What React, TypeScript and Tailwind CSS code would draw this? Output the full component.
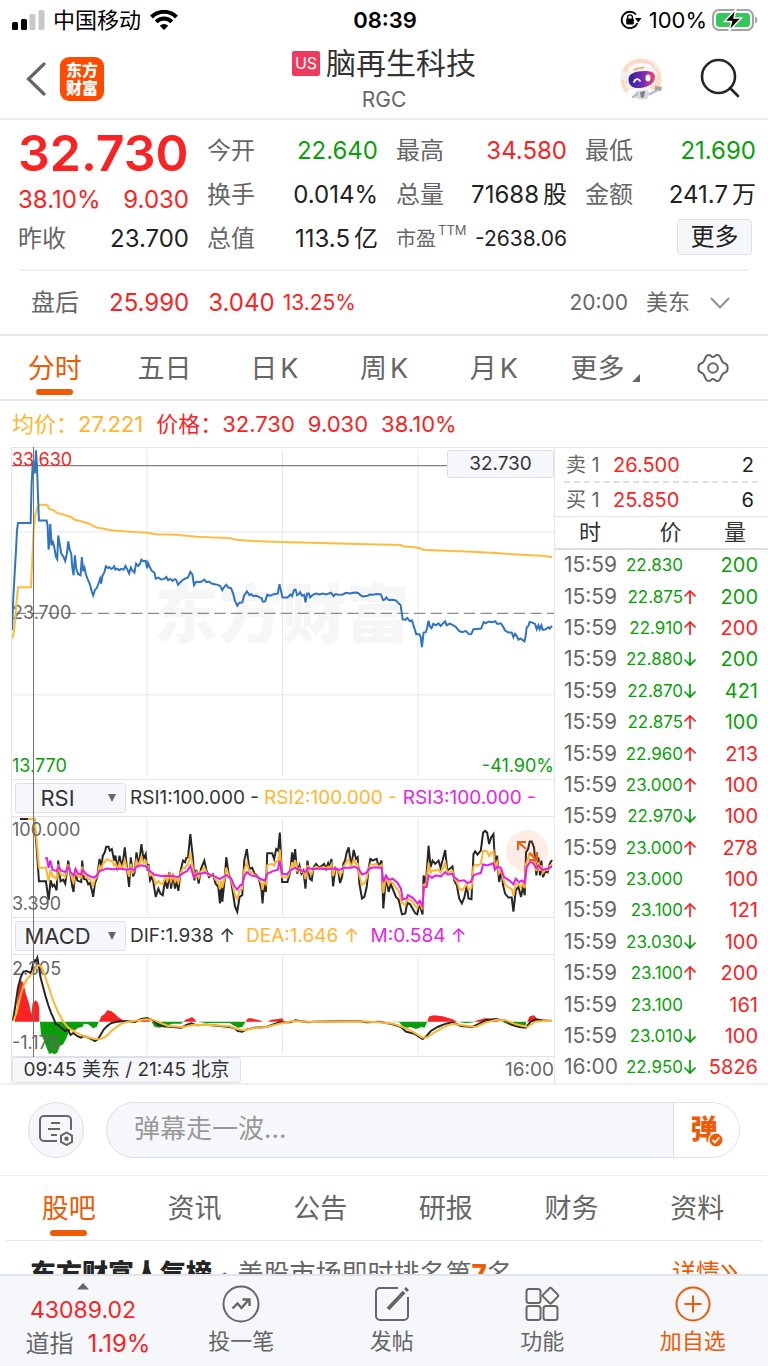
import { ReactNode } from "react";

type Point = [number, number];

const parse = (text: string): Point[] =>
  text
    .trim()
    .split(/\s+/)
    .map((pair) => pair.split(",").map(Number) as Point);

const path = (points: Point[]) => "M" + points.map(([x, y]) => `${x} ${y}`).join("L");

const valueAt = (points: Point[], x: number) => {
  for (let i = 1; i < points.length; i++) {
    const [x0, y0] = points[i - 1];
    const [x1, y1] = points[i];
    if (x >= x0 && x <= x1) return x1 === x0 ? y1 : y0 + ((y1 - y0) * (x - x0)) / (x1 - x0);
  }
  return points[points.length - 1][1];
};

const PRICE = parse(`36,570 40,470 44,400 48,330 51,270 54,247 92,247 95,130 98,72 100,60 103,80 105,98 108,28 111,75 114,160 117,240 140,240 143,255 146,328 149,300 151,250 155,315 158,300 163,320 168,350 172,357 175,285 180,315 184,340 190,348 196,362 201,340 205,303 210,330 214,340 217,380 221,405 225,345 229,385 235,402 242,405 246,350 250,393 254,382 258,402 264,418 270,432 276,455 280,466 285,450 291,443 296,430 301,415 304,430 308,407 314,395 318,378 324,383 328,380 334,386 339,384 343,378 347,388 353,385 358,390 364,386 372,388 377,377 383,388 388,400 393,382 399,392 404,397 409,370 415,377 421,370 425,358 430,363 438,362 442,384 445,368 450,380 456,392 464,397 468,415 476,412 484,418 494,416 500,410 505,420 512,416 518,422 525,417 530,420 535,434 542,426 548,420 556,415 565,412 572,395 578,402 583,435 590,424 598,426 606,424 614,418 620,426 628,424 636,430 645,432 655,434 662,438 668,450 674,440 680,434 686,442 694,444 700,458 706,482 713,497 720,488 728,487 734,465 742,454 750,465 755,462 762,468 772,467 780,472 786,474 790,485 797,484 803,464 812,467 820,463 835,460 840,432 849,472 864,472 873,463 878,468 883,450 888,448 893,465 898,462 902,456 907,466 914,464 918,487 923,460 928,460 932,472 940,464 950,460 960,463 970,460 980,463 995,458 1002,468 1008,462 1016,464 1030,463 1040,458 1052,460 1065,457 1075,458 1083,465 1090,469 1105,467 1110,463 1120,464 1132,462 1145,463 1151,480 1157,478 1161,472 1168,480 1180,479 1190,481 1197,489 1204,495 1210,538 1218,540 1224,534 1232,544 1238,541 1244,560 1251,583 1260,583 1264,590 1268,622 1273,578 1280,577 1284,562 1288,542 1292,560 1297,565 1302,552 1310,556 1318,550 1324,558 1332,550 1338,544 1342,556 1352,551 1360,555 1370,561 1380,574 1390,577 1400,573 1408,582 1416,583 1423,568 1435,567 1446,566 1454,546 1460,550 1468,545 1480,547 1488,544 1495,552 1505,550 1512,560 1518,572 1528,578 1538,578 1543,592 1548,582 1554,590 1558,600 1564,596 1570,600 1576,605 1580,588 1583,562 1588,558 1592,546 1600,548 1608,552 1613,568 1618,556 1622,568 1627,556 1631,570 1640,568 1648,562 1652,566 1659,558`);

const AVERAGE = parse(`36,597 42,575 46,530 50,480 54,441 93,441 97,360 101,270 106,222 112,202 118,192 138,192 143,195 147,204 162,209 170,217 185,220 198,225 214,229 222,237 245,243 265,248 275,254 290,261 320,266 330,269 370,272 440,277 470,281 530,283 590,289 690,293 710,298 750,301 840,305 960,308 1080,311 1205,314 1212,318 1240,320 1260,323 1272,328 1320,330 1420,334 1500,339 1580,344 1640,347 1652,350 1659,350`);

const RSI1 = parse(`60,114 103,114 110,200 117,303 138,303 146,360 152,300 158,318 163,313 170,330 175,240 182,303 190,298 196,310 205,240 212,285 217,318 221,335 226,268 232,300 238,303 244,305 247,240 252,295 260,298 265,312 270,308 276,330 280,350 285,310 292,290 299,235 304,262 309,225 315,215 319,198 326,198 330,210 336,205 343,240 347,225 353,270 359,225 367,262 375,200 381,258 388,320 393,230 400,288 405,275 410,215 417,258 425,190 431,235 438,220 442,270 446,250 451,300 458,288 468,350 476,325 482,340 489,345 496,300 503,325 509,275 514,325 520,280 526,325 531,300 536,332 543,270 550,240 556,245 560,232 565,230 572,160 580,235 584,300 590,268 597,310 604,265 614,240 620,268 628,290 640,282 648,310 656,320 661,370 665,310 668,365 675,300 680,230 687,280 693,295 699,330 706,378 713,395 720,350 728,345 734,240 742,205 749,265 758,262 765,280 772,285 778,295 786,330 789,370 794,310 799,335 803,218 818,218 824,235 830,205 836,210 841,155 848,305 864,305 872,275 878,215 882,255 887,205 893,280 900,255 906,280 912,270 918,325 924,240 931,295 937,300 942,262 950,250 960,262 974,250 980,265 986,248 990,262 996,235 1001,318 1008,262 1016,270 1022,308 1028,290 1032,250 1037,240 1042,215 1048,200 1054,250 1058,240 1063,208 1070,235 1075,230 1080,310 1088,355 1095,350 1102,320 1108,262 1113,235 1120,240 1132,235 1138,258 1147,240 1152,385 1160,290 1168,335 1174,310 1180,325 1190,350 1198,358 1208,403 1218,400 1224,368 1232,372 1240,385 1248,400 1254,403 1260,370 1270,403 1273,285 1280,310 1288,195 1294,260 1300,240 1308,250 1318,240 1324,262 1330,240 1338,208 1344,270 1352,265 1360,258 1365,300 1373,315 1380,355 1388,370 1396,350 1403,315 1408,355 1417,357 1423,220 1428,212 1435,222 1445,210 1452,155 1458,150 1464,155 1470,190 1476,170 1483,160 1488,255 1494,225 1500,305 1507,270 1512,315 1518,340 1528,352 1538,352 1543,395 1550,330 1558,320 1566,350 1572,318 1577,345 1581,215 1587,205 1592,182 1598,182 1605,200 1612,285 1618,230 1623,285 1627,240 1632,290 1640,270 1646,275 1652,250 1659,238`);

const RSI3 = parse(`135,233 141,233 146,262 151,240 158,268 170,272 176,258 183,270 196,275 205,260 213,276 221,285 227,265 235,280 244,282 248,268 256,278 265,285 280,292 292,285 299,272 310,268 320,264 340,266 360,264 380,268 395,264 404,270 410,258 425,254 440,258 450,272 465,283 485,287 500,286 515,287 535,290 550,278 562,272 572,256 582,290 592,280 605,280 614,276 630,282 645,288 660,296 680,284 695,295 705,318 713,328 722,315 728,312 735,285 742,275 755,285 770,288 788,298 797,300 803,280 820,272 835,268 840,240 848,280 862,282 872,270 886,262 900,268 918,275 925,262 940,266 960,264 980,266 1000,264 1020,268 1035,262 1055,262 1065,258 1078,265 1088,282 1100,278 1110,264 1125,260 1147,262 1152,305 1160,285 1168,298 1180,295 1195,308 1205,325 1210,358 1222,355 1226,345 1240,352 1255,370 1262,362 1270,378 1274,320 1282,320 1288,285 1298,292 1310,285 1325,288 1338,275 1345,282 1360,280 1365,290 1380,302 1395,300 1405,308 1415,305 1423,285 1435,280 1445,278 1452,252 1465,255 1483,248 1487,268 1495,258 1505,262 1515,290 1530,300 1543,312 1550,295 1560,305 1570,300 1577,308 1583,260 1592,245 1600,245 1612,262 1618,255 1630,268 1645,265 1659,258`);

// The middle RSI runs between the fast and the slow one.
const RSI2: Point[] = [
  ...parse("84,114 103,114 110,180 117,262 138,262"),
  ...RSI1.filter(([x]) => x > 140).map(([x, y]): Point => [x, y * 0.42 + valueAt(RSI3, x) * 0.58]),
];

const DIF = parse(`38,720 42,700 48,660 54,620 62,590 70,572 80,570 90,575 94,572 98,555 103,538 108,540 112,530 116,552 122,590 130,620 138,650 146,675 153,695 160,710 168,730 175,732 185,742 196,750 204,745 212,762 220,756 232,765 242,770 252,765 265,770 278,776 285,780 294,775 302,762 312,745 322,735 335,726 350,722 380,720 405,723 425,714 442,711 460,718 475,730 490,736 520,738 545,740 560,732 575,727 590,733 620,731 660,735 690,738 705,742 715,750 728,752 742,745 765,740 800,738 840,724 872,724 888,718 900,720 930,724 940,722 1080,720 1100,724 1140,722 1180,730 1205,738 1220,752 1245,758 1260,768 1270,774 1282,765 1295,750 1315,738 1340,728 1360,724 1385,735 1420,738 1440,728 1460,718 1490,714 1520,720 1540,732 1560,738 1580,740 1595,722 1610,715 1630,718 1659,720`);

const DEA = parse(`40,720 50,695 60,650 70,615 80,595 95,580 103,570 110,556 118,553 126,560 135,585 145,615 155,645 165,672 175,695 190,722 205,740 220,750 240,760 260,768 285,774 305,773 320,765 335,750 350,738 365,728 385,722 440,715 460,716 480,725 505,735 550,738 580,732 620,731 690,736 715,745 735,748 760,742 800,738 840,728 880,720 940,723 1080,721 1140,724 1180,728 1210,738 1240,752 1270,770 1285,768 1305,755 1330,740 1360,728 1385,732 1430,738 1460,724 1490,717 1520,718 1550,730 1585,738 1610,722 1640,719 1659,720`);

const GAINS = [
  "44,722 50,690 55,620 62,597 70,605 78,640 88,670 94,700 98,665 108,658 114,665 118,680 118,722",
  "297,722 305,705 315,698 322,688 334,690 345,698 355,708 368,716 375,722",
  "420,722 430,717 445,717 452,722",
  "550,722 562,714 570,712 577,708 585,715 590,722",
  "738,722 745,712 755,712 780,718 790,722",
  "805,722 815,716 835,714 849,712 853,722",
  "1284,722 1290,706 1305,703 1330,706 1360,715 1375,722",
  "1425,722 1435,718 1460,711 1480,714 1500,722",
  "1584,722 1592,706 1605,703 1615,715 1622,722",
];

const LOSSES = [
  "120,722 123,760 133,780 140,800 148,820 155,815 163,820 172,815 180,795 190,790 200,770 206,755 214,745 225,748 235,740 248,738 252,728 265,730 280,742 290,738 297,722",
  "455,722 465,738 480,740 495,735 520,728 545,728 550,722",
  "595,722 620,727 690,726 705,735 715,740 728,738 738,722",
  "1170,722 1200,724 1215,742 1235,738 1250,744 1268,738 1276,740 1284,722",
  "1376,722 1400,727 1424,724 1425,722",
  "1510,722 1530,732 1550,735 1580,732 1582,722",
];

const VERTICALS = [442, 849, 1256];

function Line({ points, color, width = 2 }: { points: Point[]; color: string; width?: number }) {
  return (
    <path
      d={path(points)}
      fill="none"
      stroke={color}
      strokeWidth={width}
      strokeLinejoin="miter"
      vectorEffect="non-scaling-stroke"
    />
  );
}

function Grid({ top, bottom, rows = [] }: { top: number; bottom: number; rows?: number[] }) {
  return (
    <g stroke="#e3e8ee" strokeWidth={3}>
      {VERTICALS.map((x) => (
        <path key={x} d={`M${x} ${top + 6}V${bottom - 6}`} />
      ))}
      {rows.map((y) => (
        <path key={y} d={`M36 ${y}H1665`} />
      ))}
    </g>
  );
}

function PriceChart() {
  return (
    <div className="relative h-[333px] border-y border-[#e3e6ea]">
      <div
        aria-hidden="true"
        className="absolute left-[142px] top-[130px] text-[64px] leading-[72px] font-black text-[#f6f6f6]"
      >
        东方财富
      </div>
      <svg
        role="img"
        aria-label="分时走势"
        className="absolute inset-0 h-full w-full"
        viewBox="36 21 1629 999"
        preserveAspectRatio="none"
      >
        <Grid top={21} bottom={1019} rows={[274, 766]} />
        <path d="M44 520H1665" stroke="#8b8b8b" strokeWidth={4} strokeDasharray="34 16" />
        <path d="M36 74H1665" stroke="#808080" strokeWidth={4} />
      </svg>
      <span className="absolute left-0 top-0 text-[18px] leading-[24px] text-[#fa2222]">33.630</span>
      <span className="absolute left-0 top-[153px] text-[18px] leading-[24px] text-[#666]">23.700</span>
      <span className="absolute bottom-0 left-0 text-[18px] leading-[26px] text-[#0a9f0a]">13.770</span>
      <span className="absolute right-0 bottom-0 text-[18px] leading-[26px] text-[#0a9f0a]">-41.90%</span>
      <svg
        aria-hidden="true"
        className="absolute inset-0 h-full w-full"
        viewBox="36 21 1629 999"
        preserveAspectRatio="none"
      >
        <Line points={AVERAGE} color="#ffbb3c" />
        <Line points={PRICE} color="#2f74c0" />
      </svg>
      <span className="absolute right-0 top-[2px] flex h-[28px] w-[107px] items-center justify-center rounded-[3px] border border-[#dcdfe6] bg-[#f6f7fa] text-[19px] text-[#333]">
        32.730
      </span>
    </div>
  );
}

function RsiChart() {
  return (
    <div className="relative h-[102px] border-y border-[#dfe2e8]">
      <svg
        role="img"
        aria-label="RSI 指标"
        className="absolute inset-0 h-full w-full"
        viewBox="36 108 1629 303"
        preserveAspectRatio="none"
      >
        <Grid top={108} bottom={411} />
        <Line points={RSI1} color="#262626" />
        <Line points={RSI2} color="#ffb52e" />
        <Line points={RSI3} color="#e61ee6" />
      </svg>
      <span className="absolute left-0 top-0 text-[18px] leading-[26px] text-[#666]">100.000</span>
      <span className="absolute bottom-0 left-0 text-[18px] leading-[26px] text-[#666]">3.390</span>
      <button
        aria-label="放大图表"
        className="absolute right-[6px] top-[13px] flex h-[42px] w-[42px] items-center justify-center rounded-full bg-[#f0530a]/10"
      >
        <svg viewBox="0 0 42 42" className="h-[42px] w-[42px]" fill="none" stroke="#f25a0c" strokeWidth="2">
          <path d="M12 20V12h8M12 12l8 7M31 22v8h-8M31 30l-8-7" />
        </svg>
      </button>
    </div>
  );
}

function MacdChart() {
  return (
    <div className="relative h-[103px] border-y border-[#dfe2e8]">
      <svg
        role="img"
        aria-label="MACD 指标"
        className="absolute inset-0 h-full w-full"
        viewBox="36 522 1629 303"
        preserveAspectRatio="none"
      >
        <Grid top={522} bottom={825} />
        {GAINS.map((area) => (
          <polygon key={area} points={area} fill="#fa2222" />
        ))}
        {LOSSES.map((area) => (
          <polygon key={area} points={area} fill="#0a9f0a" />
        ))}
      </svg>
      <span className="absolute left-0 top-0 text-[18px] leading-[28px] text-[#666]">2.305</span>
      <span className="absolute bottom-0 left-0 text-[18px] leading-[26px] text-[#666]">-1.178</span>
      <svg
        aria-hidden="true"
        className="absolute inset-0 h-full w-full"
        viewBox="36 522 1629 303"
        preserveAspectRatio="none"
      >
        <Line points={DIF} color="#262626" />
        <Line points={DEA} color="#ffb52e" />
      </svg>
    </div>
  );
}

function IndicatorBar({
  label,
  value,
  options,
  children,
}: {
  label: string;
  value: string;
  options: string[];
  children: ReactNode;
}) {
  return (
    <div className="flex h-[36px] items-center gap-[4px] pl-[3px]">
      <div className="relative">
        <select
          aria-label={label}
          defaultValue={value}
          className="h-[30px] w-[111px] appearance-none rounded-[3px] border border-[#dcdfe6] bg-[#f6f7fa] pr-[26px] text-center text-[22px] leading-[28px] text-[#333]"
        >
          {options.map((option) => (
            <option key={option}>{option}</option>
          ))}
        </select>
        <svg viewBox="0 0 10 10" className="pointer-events-none absolute right-[9px] top-[10px] h-[10px] w-[10px]" fill="#666">
          <path d="M1 1h8L5 9z" />
        </svg>
      </div>
      <div className="flex text-[19px] whitespace-nowrap">{children}</div>
    </div>
  );
}

type Direction = "up" | "down" | "none";
type Trade = [string, string, Direction, string, "buy" | "sell"];

const TRADES: Trade[] = [
  ["15:59", "22.830", "none", "200", "sell"],
  ["15:59", "22.875", "up", "200", "sell"],
  ["15:59", "22.910", "up", "200", "buy"],
  ["15:59", "22.880", "down", "200", "sell"],
  ["15:59", "22.870", "down", "421", "sell"],
  ["15:59", "22.875", "up", "100", "sell"],
  ["15:59", "22.960", "up", "213", "buy"],
  ["15:59", "23.000", "up", "100", "buy"],
  ["15:59", "22.970", "down", "100", "buy"],
  ["15:59", "23.000", "up", "278", "buy"],
  ["15:59", "23.000", "none", "100", "buy"],
  ["15:59", "23.100", "up", "121", "buy"],
  ["15:59", "23.030", "down", "100", "buy"],
  ["15:59", "23.100", "up", "200", "buy"],
  ["15:59", "23.100", "none", "161", "buy"],
  ["15:59", "23.010", "down", "100", "buy"],
  ["16:00", "22.950", "down", "5826", "buy"],
];

function Arrow({ direction }: { direction: Direction }) {
  if (direction === "none") return <span className="inline-block w-[13px]" />;
  const up = direction === "up";
  return (
    <svg
      viewBox="0 0 13 16"
      className="inline-block h-[16px] w-[13px] align-[-2px]"
      fill="none"
      stroke={up ? "#fa2222" : "#0a9f0a"}
      strokeWidth="1.7"
    >
      <path d={up ? "M7 15V2M1.500 7.500L7 2l5.500 5.500" : "M7 1v13M1.500 8.500L7 14l5.500-5.500"} />
    </svg>
  );
}

function Depth({ label, price, size }: { label: string; price: string; size: string }) {
  return (
    <div className="flex h-[33px] items-center pr-[14px] pl-[11px] text-[20px]">
      <span className="w-[47px] text-[#666]">{label}</span>
      <span className="flex-1 text-[#fa2222]">{price}</span>
      <span className="text-[#222]">{size}</span>
    </div>
  );
}

function TradePanel() {
  return (
    <div className="flex w-[213px] shrink-0 flex-col border-t border-[#e6e6e6]">
      <Depth label="卖 1" price="26.500" size="2" />
      <div className="mr-[10px] ml-[9px] border-t-2 border-dashed border-[#dcdfe6]" />
      <Depth label="买 1" price="25.850" size="6" />
      <table className="w-full flex-1 table-fixed border-t border-[#e3e3e3]">
        <thead>
          <tr className="h-[32px] border-b-2 border-[#dcdfe6] text-[22px] leading-[28px] text-[#333]">
            <th className="w-[66px] pl-[4px] text-center font-normal">时</th>
            <th className="pl-[24px] text-center font-normal">价</th>
            <th className="w-[72px] pl-[6px] text-center font-normal">量</th>
          </tr>
        </thead>
        <tbody>
          {TRADES.map(([time, price, direction, volume, side], i) => (
            <tr key={i} className="leading-[28px] whitespace-nowrap">
              <td className="pl-[9px] text-[21px] text-[#666]">{time}</td>
              <td className="text-right text-[17px] text-[#0a9f0a]">
                {price}
                <Arrow direction={direction} />
              </td>
              <td className={`pr-[10px] text-right text-[20px] ${side === "buy" ? "text-[#fa2222]" : "text-[#0a9f0a]"}`}>
                {volume}
              </td>
            </tr>
          ))}
        </tbody>
      </table>
    </div>
  );
}

function StatusBar() {
  return (
    <div className="grid h-[40px] grid-cols-[1fr_auto_1fr] items-center pr-[10px] pl-[12px] text-[22px] text-black">
      <div className="flex items-center">
        <svg viewBox="0 0 33 20" className="h-[20px] w-[33px]">
          <rect x="0" y="12" width="6" height="8" rx="1.500" />
          <rect x="9" y="9" width="6" height="11" rx="1.500" />
          <rect x="17.500" y="4" width="6" height="16" rx="1.500" fill="#c8c8c8" />
          <rect x="26.500" y="0" width="6" height="20" rx="1.500" fill="#c8c8c8" />
        </svg>
        <span className="ml-[8px]">中国移动</span>
        <svg viewBox="0 0 28 20" className="ml-[9px] h-[20px] w-[28px]">
          <path d="M14 20l-4.200-4.300a6 6 0 0 1 8.400 0z" />
          <path d="M6.200 11.800a11 11 0 0 1 15.600 0M1.500 7a17.700 17.700 0 0 1 25 0" fill="none" stroke="#000" strokeWidth="4" />
        </svg>
      </div>
      <span className="font-semibold">08:39</span>
      <div className="flex items-center justify-end">
        <svg viewBox="0 0 22 20" className="h-[20px] w-[22px]">
          <path d="M16 4.500A8.200 8.200 0 1 0 17.500 13" fill="none" stroke="#000" strokeWidth="1.800" />
          <path d="M15 8h6.500l-3.200 4.500z" />
          <rect x="6.200" y="8.600" width="7.600" height="6" rx="1" />
          <path d="M7.600 9V7.300a2.400 2.400 0 0 1 4.800 0V9" fill="none" stroke="#000" strokeWidth="1.400" />
        </svg>
        <span className="ml-[7px]">100%</span>
        <svg viewBox="0 0 46 24" className="ml-[5px] h-[24px] w-[46px]">
          <rect x="1" y="2" width="40" height="20" rx="6" fill="none" stroke="#a3a3a3" strokeWidth="2" />
          <path d="M43 8.500c3 .8 3 6.200 0 7z" fill="#a3a3a3" />
          <rect x="4" y="5" width="34" height="14" rx="3.500" fill="#35c759" />
          <path d="M24 1L12.500 13.500h7L17 23l12.500-13h-7.500z" stroke="#fff" strokeWidth="1.500" />
        </svg>
      </div>
    </div>
  );
}

function Robot() {
  return (
    <svg viewBox="0 0 44 44" className="h-[44px] w-[44px]">
      <defs>
        <linearGradient id="visor" x1="0" x2="1">
          <stop offset="0" stopColor="#2c1f9c" />
          <stop offset="0.550" stopColor="#7a2bb0" />
          <stop offset="1" stopColor="#f04a6a" />
        </linearGradient>
      </defs>
      <circle cx="21" cy="22" r="20.500" fill="#ffd9c4" />
      <path d="M8 32l22-1 9 6a20 20 0 0 1-32 0z" fill="#fff" />
      <path d="M16 34l11-1 3 4-3 5-7 .5-5-2z" fill="#d9d9de" />
      <path d="M13 40l4-3M30 37l6-3" stroke="#b9b9c0" strokeWidth="2.500" strokeLinecap="round" />
      <path d="M35 29l7 1-1 4-6-1z" fill="#a2a2aa" />
      <path d="M20 35l1 6 3-1 1-6z" fill="#7d7d88" />
      <path d="M1 13l6 3-1 9-5-3zM5 27l4-1 1 5-4-1zM35 11l-3-9c4 2 7 6 8 10z" fill="#f0f0f4" />
      <path d="M7 19C8 9 17 5 25 7s12 7 12 13-5 12-17 12.500S6 27 7 19z" fill="#f4f4f7" />
      <path d="M9 14C12 7 24 5 31 10" fill="none" stroke="#fff" strokeWidth="3" />
      <path d="M14 13c3-1.500 6-2.500 10-2.500" fill="none" stroke="#f39a4b" strokeWidth="1.600" />
      <path d="M8.500 22c0-5 6-8 16-8 8 0 10.500 2 10.500 6 0 6-6 10-15 11-8 .5-11.500-3-11.500-9z" fill="url(#visor)" />
      <path d="M14 25c1-3 4-4 6-1" fill="none" stroke="#fff" strokeWidth="1.800" strokeLinecap="round" />
      <ellipse cx="28" cy="21" rx="2.500" ry="3.400" fill="#fff" />
    </svg>
  );
}

function Header() {
  return (
    <header className="grid h-[80px] grid-cols-[1fr_auto_1fr] items-center border-b-2 border-[#ececec] px-[26px]">
      <div className="flex items-center gap-[14px]">
        <button aria-label="返回">
          <svg viewBox="0 0 20 34" className="h-[34px] w-[20px]" fill="none" stroke="#666" strokeWidth="3.200" strokeLinecap="round">
            <path d="M18 2L2.500 17 18 32" />
          </svg>
        </button>
        <a
          href="#home"
          className="flex h-[44px] w-[44px] flex-col items-center justify-center rounded-[9px] bg-[#ff4a00] text-[16px] leading-[18px] font-black text-white"
        >
          <span>东方</span>
          <span>财富</span>
        </a>
      </div>
      <div className="flex flex-col items-center pt-[4px]">
        <h1 className="flex items-center gap-[6px] text-[30px] leading-[38px] text-[#333]">
          <span className="flex h-[25px] w-[28px] items-center justify-center rounded-[2px] bg-[#ef3a5d] text-[16px] text-white">US</span>
          脑再生科技
        </h1>
        <span className="text-[21px] leading-[36px] text-[#666]">RGC</span>
      </div>
      <div className="flex items-center justify-end gap-[36px]">
        <button aria-label="智能助手">
          <Robot />
        </button>
        <button aria-label="搜索">
          <svg viewBox="0 0 42 42" className="h-[42px] w-[42px]" fill="none" stroke="#262626" strokeWidth="2.600">
            <circle cx="18.500" cy="18.500" r="16.500" />
            <path d="M30 30L38 38" strokeLinecap="round" />
          </svg>
        </button>
      </div>
    </header>
  );
}

const red = "text-[#fa2222]";
const green = "text-[#0a9f0a]";
const ink = "text-[#222]";

function Quote({ label, value, unit, tone }: { label: string; value: string; unit?: string; tone: string }) {
  return (
    <div className="flex h-[44px] items-center justify-between">
      <dt className="text-[#666]">{label}</dt>
      <dd className={`flex gap-[4px] ${tone}`}>
        {value}
        {unit && <span>{unit}</span>}
      </dd>
    </div>
  );
}

function QuotePanel() {
  return (
    <section className="grid grid-cols-4 gap-x-[18px] pt-[9px] pr-[12px] pb-[8px] pl-[18px] text-[24px] whitespace-nowrap">
      <div>
        <div className="flex h-[48px] items-center text-[50px] leading-[48px] font-semibold text-[#fa2222]">32.730</div>
        <div className="flex h-[46px] items-center justify-between text-[#fa2222]">
          <span>38.10%</span>
          <span>9.030</span>
        </div>
        <div className="flex h-[32px] items-center justify-between">
          <span className="text-[#666]">昨收</span>
          <span className="text-[#222]">23.700</span>
        </div>
      </div>
      <dl>
        <Quote label="今开" value="22.640" tone={green} />
        <Quote label="换手" value="0.014%" tone={ink} />
        <Quote label="总值" value="113.5" unit="亿" tone={ink} />
      </dl>
      <dl>
        <Quote label="最高" value="34.580" tone={red} />
        <Quote label="总量" value="71688" unit="股" tone={ink} />
        <div className="flex h-[44px] items-center justify-between">
          <dt className="flex gap-[2px] text-[20px] text-[#666]">
            市盈<sup className="top-0 self-start text-[13px] leading-[12px]">TTM</sup>
          </dt>
          <dd className="text-[21px] text-[#222]">-2638.06</dd>
        </div>
      </dl>
      <div>
        <dl>
          <Quote label="最低" value="21.690" tone={green} />
          <Quote label="金额" value="241.7" unit="万" tone={ink} />
        </dl>
        <div className="flex justify-end pt-[2px] pr-[4px]">
          <button className="h-[36px] w-[75px] rounded-[4px] border border-[#dcdfe6] bg-[#f6f7fa] text-[24px] leading-[34px] text-[#222]">
            更多
          </button>
        </div>
      </div>
    </section>
  );
}

function AfterHours() {
  return (
    <section className="mx-[19px] flex h-[65px] items-center border-t-2 border-[#f0f0f0] pr-[18px] pl-[12px] text-[24px] text-[#fa2222]">
      <span className="text-[#666]">盘后</span>
      <span className="ml-[30px]">25.990</span>
      <span className="ml-[19px]">3.040</span>
      <span className="ml-[8px] text-[21px]">13.25%</span>
      <span className="ml-auto text-[21px] text-[#666]">20:00</span>
      <span className="ml-[18px] text-[22px] text-[#666]">美东</span>
      <button aria-label="展开" className="ml-[19px]">
        <svg viewBox="0 0 22 14" className="h-[14px] w-[22px]" fill="none" stroke="#8f8f94" strokeWidth="2">
          <path d="M2 2l9 9.500L20 2" />
        </svg>
      </button>
    </section>
  );
}

function GearIcon() {
  return (
    <svg viewBox="0 0 32 30" className="h-[30px] w-[32px]" fill="none" stroke="#666" strokeWidth="2">
      <circle cx="16" cy="15" r="4.800" />
      <path d="M9 3.500c1.500-2 3.500-2 5-.5 1.200 1.200 2.800 1.200 4 0 1.500-1.500 3.500-1.500 5 .5l2 4.500c.7 1.500 1.500 2 3 2.500 2.500.8 2.800 2 2.500 4.500 .3 2.500 0 3.700-2.500 4.500-1.500.5-2.300 1-3 2.500l-2 4.500c-1.500 2-3.500 2-5 .5-1.200-1.200-2.800-1.200-4 0-1.500 1.500-3.500 1.500-5-.5l-2-4.500c-.7-1.500-1.500-2-3-2.500C1.500 18.700 1.200 17.500 1.500 15c-.3-2.500 0-3.700 2.500-4.500 1.500-.5 2.300-1 3-2.500z" />
    </svg>
  );
}

function PeriodTabs() {
  return (
    <nav className="grid h-[67px] grid-cols-7 border-t-2 border-b-2 border-[#e6e6ea] text-[27px] text-[#666]">
      <button className="relative pt-[3px] text-[#ef5a05]">
        分时
        <span className="absolute inset-x-0 bottom-[4px] mx-auto h-[6px] w-[37px] rounded-full bg-[#ef5a05]" />
      </button>
      <button className="pt-[3px]">五日</button>
      {["日", "周", "月"].map((unit) => (
        <button key={unit} className="flex items-center justify-center gap-[3px] pt-[3px]">
          {unit}
          <span>K</span>
        </button>
      ))}
      <button className="flex items-center justify-center gap-[8px] pt-[3px] pl-[4px]">
        更多
        <svg viewBox="0 0 8 8" className="mt-[17px] h-[8px] w-[8px]" fill="#666">
          <path d="M8 0v8H0z" />
        </svg>
      </button>
      <button aria-label="设置" className="flex items-center justify-center">
        <GearIcon />
      </button>
    </nav>
  );
}

function CommentBar() {
  return (
    <section className="flex h-[93px] items-center gap-[22px] border-t-2 border-b border-[#efefef] px-[28px]">
      <button
        aria-label="弹幕设置"
        className="flex h-[56px] w-[56px] shrink-0 items-center justify-center rounded-full border border-[#dcdfe6] bg-[#f6f7fa]"
      >
        <svg viewBox="0 0 34 32" className="h-[32px] w-[34px]" fill="none" stroke="#666" strokeWidth="2">
          <path d="M18 27H5a4 4 0 0 1-4-4V6a4 4 0 0 1 4-4h23a4 4 0 0 1 4 4v10M12 9h9M9 15h12M12 21h6" />
          <path d="M27.500 18.500l5.500 3.200v6.200L27.500 31 22 27.900v-6.200z" />
          <circle cx="27.500" cy="24.800" r="1.200" fill="#666" stroke="#666" />
        </svg>
      </button>
      <div className="flex h-[56px] min-w-0 flex-1 overflow-hidden rounded-full border border-[#dcdfe6] bg-[#f6f7fa]">
        <input
          aria-label="弹幕"
          placeholder="弹幕走一波..."
          className="min-w-0 flex-1 bg-transparent pb-[4px] pl-[27px] text-[26px] text-[#333] outline-none placeholder:text-[#999]"
        />
        <button aria-label="弹幕开关" className="relative w-[66px] border-l border-[#dcdfe6] bg-white">
          <span className="block pr-[5px] text-[27px] leading-[52px] font-black text-[#ef5a05]">弹</span>
          <svg viewBox="0 0 16 16" className="absolute right-[15px] bottom-[9px] h-[16px] w-[16px]">
            <circle cx="8" cy="8" r="7.200" fill="#ef5a05" stroke="#fff" strokeWidth="1.500" />
            <path d="M4.500 8l2.500 2.500 4.300-5" fill="none" stroke="#fff" strokeWidth="1.800" />
          </svg>
        </button>
      </div>
    </section>
  );
}

function ContentTabs() {
  return (
    <nav className="mx-[6px] grid h-[65px] grid-cols-6 border-b border-[#e8e8e8] pr-[2px] text-[27px] text-[#666]">
      <button className="relative pt-[3px] text-[#ef5a05]">
        股吧
        <span className="absolute inset-x-0 bottom-[4px] mx-auto h-[6px] w-[37px] rounded-full bg-[#ef5a05]" />
      </button>
      {["资讯", "公告", "研报", "财务", "资料"].map((tab) => (
        <button key={tab} className="pt-[3px]">
          {tab}
        </button>
      ))}
    </nav>
  );
}

function BottomItem({ label, active, children }: { label: string; active?: boolean; children: ReactNode }) {
  return (
    <button
      className={`flex flex-1 flex-col items-center pt-[9px] text-[22px] leading-[36px] ${active ? "text-[#ef5a05]" : "text-[#666]"}`}
    >
      <svg viewBox="0 0 38 38" className="h-[38px] w-[38px]" fill="none" stroke="currentColor" strokeWidth="2">
        {children}
      </svg>
      {label}
    </button>
  );
}

function BottomBar() {
  return (
    <footer className="flex h-[92px] shrink-0 border-t-2 border-[#e1e5ea] bg-[#f6f7fa]">
      <button className="flex w-[166px] flex-col items-center text-[#fa2222]">
        <svg viewBox="0 0 14 8" className="mt-[6px] h-[8px] w-[14px]" fill="#666">
          <path d="M7 1l6 6.500H1z" />
        </svg>
        <span className="text-[23px] leading-[40px]">43089.02</span>
        <span className="flex gap-[14px] pl-[10px] text-[24px] leading-[28px]">
          <span className="text-[#666]">道指</span>
          <span>1.19%</span>
        </span>
      </button>
      <BottomItem label="投一笔">
        <circle cx="19" cy="19" r="17.500" />
        <path d="M10.500 23.500l5-5 4 4.500 7-8M20.500 14.500h7v6.500" strokeWidth="2.400" />
      </BottomItem>
      <BottomItem label="发帖">
        <path d="M25 3H7a4 4 0 0 0-4 4v24a4 4 0 0 0 4 4h24a4 4 0 0 0 4-4V12" />
        <path d="M15 24L31 7" strokeWidth="4" />
        <path d="M32.500 5.500l2-2" strokeWidth="4" />
      </BottomItem>
      <BottomItem label="功能">
        <rect x="3.500" y="4" width="14" height="14" rx="2.500" />
        <rect x="3.500" y="21" width="14" height="14" rx="2.500" />
        <rect x="20.500" y="21" width="14" height="14" rx="2.500" />
        <path d="M26.500 3.200q1-1 2 0l6.300 6.400q1 1 0 2l-6.300 6.400q-1 1-2 0l-6.300-6.400q-1-1 0-2z" />
      </BottomItem>
      <BottomItem label="加自选" active>
        <circle cx="19" cy="19" r="16.500" />
        <path d="M19 10.500v17M10.500 19h17" />
      </BottomItem>
    </footer>
  );
}

export default function App() {
  return (
    <div className="flex h-screen flex-col bg-white font-['Inter','Noto_Sans_CJK_SC',sans-serif]">
      <main className="min-h-0 flex-1 overflow-y-auto [scrollbar-width:none]">
        <StatusBar />
        <Header />
        <QuotePanel />
        <AfterHours />
        <PeriodTabs />
        <div className="flex h-[46px] items-center gap-[13px] pl-[12px] text-[22px] text-[#fa2222]">
          <span className="text-[#ffb52e]">均价：27.221</span>
          <span>价格：32.730</span>
          <span>9.030</span>
          <span>38.10%</span>
        </div>
        <section className="flex">
          <div className="relative ml-[11px] min-w-0 flex-1 border-x border-[#e3e6ea]">
            <PriceChart />
            <IndicatorBar label="副图一" value="RSI" options={["RSI", "KDJ", "BOLL"]}>
              <span className="text-[#333]">RSI1:100.000 -</span>
              <span className="ml-[5px] text-[#ffb52e]">RSI2:100.000 -</span>
              <span className="ml-[6px] text-[#e61ee6]">RSI3:100.000 -</span>
            </IndicatorBar>
            <RsiChart />
            <IndicatorBar label="副图二" value="MACD" options={["MACD", "VOL", "DMI"]}>
              <span className="text-[#333]">DIF:1.938 ↑</span>
              <span className="ml-[11px] text-[#ffb52e]">DEA:1.646 ↑</span>
              <span className="ml-[11px] text-[#e61ee6]">M:0.584 ↑</span>
            </IndicatorBar>
            <MacdChart />
            <div className="flex h-[26px] items-center justify-between text-[19px] leading-[24px] text-[#666]">
              <span className="flex h-[26px] w-[229px] items-center justify-center rounded-[3px] border border-[#dcdfe6] bg-[#f6f7fa] text-[#333]">
                09:45 美东 / 21:45 北京
              </span>
              <span>16:00</span>
            </div>
            <div className="absolute top-0 bottom-[26px] left-[21px] w-px bg-[#707070]" />
          </div>
          <TradePanel />
        </section>
        <CommentBar />
        <ContentTabs />
        <div className="flex h-[64px] items-center px-[30px] text-[26px] whitespace-nowrap text-[#666]">
          <strong className="font-black text-[#262626]">东方财富人气榜</strong>
          <span className="mx-[9px]">·</span>
          <span>
            美股市场即时排名第<strong className="font-extrabold text-[#ef5a05]">7</strong>名
          </span>
          <a href="#rank" className="ml-auto flex items-center text-[24px] text-[#ef5a05]">
            详情
            <svg viewBox="0 0 18 18" className="h-[18px] w-[18px]" fill="none" stroke="currentColor" strokeWidth="2">
              <path d="M2 1l7 8-7 8M9 1l7 8-7 8" />
            </svg>
          </a>
        </div>
      </main>
      <BottomBar />
    </div>
  );
}
